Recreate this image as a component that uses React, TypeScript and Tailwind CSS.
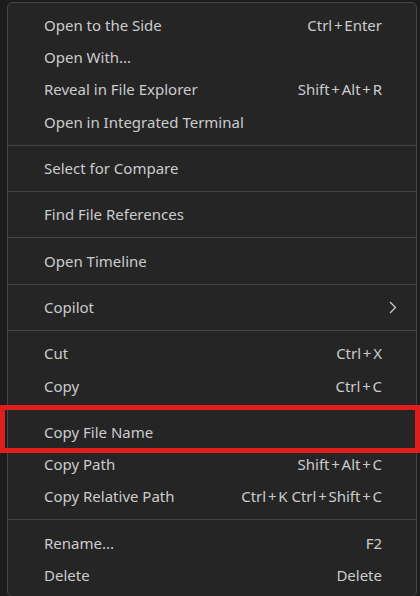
import React from "react";

type Item = { label: string; keys?: string; sub?: boolean } | "sep";

const items: Item[] = [
  { label: "Open to the Side", keys: "Ctrl+Enter" },
  { label: "Open With..." },
  { label: "Reveal in File Explorer", keys: "Shift+Alt+R" },
  { label: "Open in Integrated Terminal" },
  "sep",
  { label: "Select for Compare" },
  "sep",
  { label: "Find File References" },
  "sep",
  { label: "Open Timeline" },
  "sep",
  { label: "Copilot", sub: true },
  "sep",
  { label: "Cut", keys: "Ctrl+X" },
  { label: "Copy", keys: "Ctrl+C" },
  "sep",
  { label: "Copy File Name" },
  { label: "Copy Path", keys: "Shift+Alt+C" },
  { label: "Copy Relative Path", keys: "Ctrl+K Ctrl+Shift+C" },
  "sep",
  { label: "Rename...", keys: "F2" },
  { label: "Delete", keys: "Delete" },
];

function Chevron() {
  return (
    <svg width="8" height="13" viewBox="0 0 8 13" fill="none">
      <path d="M1 1l5.5 5.5L1 12" stroke="#cccccc" strokeWidth="1.3" />
    </svg>
  );
}

function Keys({ text }: { text: string }) {
  const parts = text.split("+");
  return (
    <span>
      {parts.map((p, i) => (
        <React.Fragment key={i}>
          {i > 0 && <span className="mx-[1.75px]">+</span>}
          {p}
        </React.Fragment>
      ))}
    </span>
  );
}

export default function App() {
  return (
    <div
      className="relative h-[596px] w-[420px] overflow-hidden bg-[#1c1c1c] pl-[7px] pt-[2px]"
      style={{ fontFamily: '"Noto Sans", "Open Sans", sans-serif' }}
    >
      <div className="w-[410px] rounded-[6px] border border-[#454545] bg-[#252526] pt-[6px] pb-[5px] text-[15px] text-[#cccccc]">
        {items.map((it, i) =>
          it === "sep" ? (
            <div key={i} className="flex h-[14px] items-center">
              <div className="h-px w-full bg-[#454545]" />
            </div>
          ) : (
            <div key={i} className="flex h-[32.3px] items-center justify-between pl-[36px] pr-[34px]">
              <span>{it.label}</span>
              {it.keys && <Keys text={it.keys} />}
              {it.sub && (
                <span className="-mr-[15px]">
                  <Chevron />
                </span>
              )}
            </div>
          )
        )}
      </div>
      {/* highlight box */}
      <div className="absolute left-0 top-[405px] h-[48px] w-[420px] border-[5px] border-[#e01e1e]" />
    </div>
  );
}
